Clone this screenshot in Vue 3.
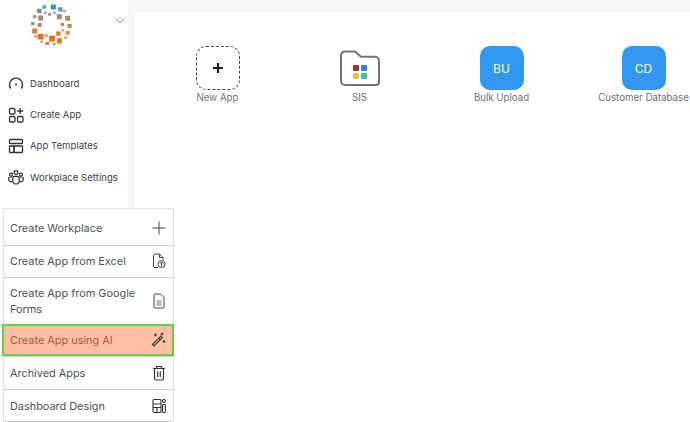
<template>
  <div class="page">
    <aside class="sidebar">
      <div class="brand">
        <svg class="logo" width="44" height="44" viewBox="90 12 132 132">
          <path d="M122 54L104 50M119 75L98 71M122 110L104 93M156 116L139 106M175 101L188 91M178 122L197 113M187 73L209 78M178 50L163 38M118 33L133 21M160 21L181 28" stroke="#d9b9a0" stroke-width="1.500" fill="none" />
          <rect v-for="(s, i) in logoSquares" :key="i" :x="s[0] - s[2] / 2" :y="s[1] - s[2] / 2" :width="s[2]" :height="s[2]" rx="1" :fill="s[3]" />
        </svg>
        <svg class="chevron" width="10" height="6" viewBox="0 0 10 6" fill="none" stroke="#8a8f98" stroke-width="1">
          <path d="M1 1l4 4 4-4" />
        </svg>
      </div>

      <nav class="nav">
        <div class="nav-item">
          <svg width="16" height="16" viewBox="0 0 16 16" fill="none" stroke="#2f3338" stroke-width="1.400">
            <path d="M2.800 12.500a6.500 6.500 0 1 1 10.400 0" />
            <circle cx="8" cy="8.500" r="1" fill="#2f3338" stroke="none" />
          </svg>
          <span>Dashboard</span>
        </div>
        <div class="nav-item">
          <svg width="16" height="16" viewBox="0 0 16 16" fill="none" stroke="#2f3338" stroke-width="1.300">
            <rect x="1.500" y="1.500" width="5.500" height="5.500" rx="1.200" />
            <rect x="1.500" y="9.500" width="5.500" height="5.500" rx="1.200" />
            <rect x="9.500" y="9.500" width="5.500" height="5.500" rx="1.200" />
            <path d="M12.200 1v6M9.200 4h6" />
          </svg>
          <span>Create App</span>
        </div>
        <div class="nav-item">
          <svg width="16" height="16" viewBox="0 0 16 16" fill="none" stroke="#2f3338" stroke-width="1.300">
            <rect x="1.500" y="1.500" width="13" height="4" rx="0.800" />
            <rect x="1.500" y="8" width="4.500" height="6.500" rx="0.800" />
            <rect x="6" y="8" width="8.500" height="6.500" rx="0.800" />
          </svg>
          <span>App Templates</span>
        </div>
        <div class="nav-item">
          <svg width="16" height="16" viewBox="0 0 16 16" fill="none" stroke="#2f3338" stroke-width="1.200">
            <circle cx="8" cy="3.600" r="1.900" />
            <circle cx="3" cy="5.600" r="1.500" />
            <circle cx="13" cy="5.600" r="1.500" />
            <path d="M4.800 9.200A1.800 1.800 0 0 1 6.600 7.400h2.800a1.800 1.800 0 0 1 1.800 1.800v2.600a3.200 3.200 0 0 1-6.400 0z" />
            <path d="M4.800 8H2.400A1.800 1.800 0 0 0 .6 9.800v.4A2.500 2.500 0 0 0 4.800 12M11.200 8h2.400a1.800 1.800 0 0 1 1.800 1.800v.4a2.500 2.500 0 0 1-4.200 1.800" />
          </svg>
          <span>Workplace Settings</span>
        </div>
      </nav>

      <div class="menu">
        <div class="menu-row first">
          <span>Create Workplace</span>
          <svg width="14" height="14" viewBox="0 0 14 14" fill="none" stroke="#444" stroke-width="1">
            <path d="M7 .5v13M.5 7h13" />
          </svg>
        </div>
        <div class="menu-row">
          <span>Create App from Excel</span>
          <svg width="14" height="16" viewBox="0 0 14 16" fill="none" stroke="#444" stroke-width="1">
            <path d="M6 14.500H3a1.500 1.500 0 0 1-1.500-1.500V2.500A1.500 1.500 0 0 1 3 1h4.500L11 4.500V7" />
            <path d="M7.500 1v3.500H11" />
            <circle cx="9.500" cy="11" r="3.500" />
            <path d="M9.500 13.500V9M7.800 10.500l1.700-1.700 1.700 1.700" />
          </svg>
        </div>
        <div class="menu-row">
          <span>Create App from Google Forms</span>
          <svg width="14" height="16" viewBox="0 0 14 16" fill="none" stroke="#444" stroke-width="1">
            <path d="M3 1h5.500L12 4.500v9.500a1 1 0 0 1-1 1H3a1 1 0 0 1-1-1V2a1 1 0 0 1 1-1z" />
            <path d="M4.500 8h5M4.500 10h5M4.500 12h5" stroke="#777" />
          </svg>
        </div>
        <div class="menu-row highlight">
          <span>Create App using AI</span>
          <svg width="15" height="15" viewBox="0 0 15 15" fill="none" stroke="#3f3a36" stroke-width="1.200">
            <path d="M1.500 12.500l8.300-8.300 1.500 1.500-8.300 8.300z" />
            <path d="M7.800 6.200l1.500 1.500" />
            <path d="M4.500 1.500v3M3 3h3M11 .5v3M9.500 2h3M13 8v3M11.500 9.500h3" />
          </svg>
        </div>
        <div class="menu-row after-highlight">
          <span>Archived Apps</span>
          <svg width="14" height="16" viewBox="0 0 14 16" fill="none" stroke="#333" stroke-width="1.200">
            <path d="M1 3.500h12M4.500 3.500V1.500h5v2" />
            <rect x="2.500" y="3.500" width="9" height="11.500" rx="1.500" />
            <path d="M5.700 6.500v5.500M8.300 6.500v5.500" />
          </svg>
        </div>
        <div class="menu-row last">
          <span>Dashboard Design</span>
          <svg width="14" height="16" viewBox="0 0 14 16" fill="none" stroke="#333" stroke-width="1.100">
            <rect x="1" y="1.500" width="8" height="13" rx="1" />
            <path d="M1 6h8M1 9.500h8M5 9.500v5" />
            <rect x="10.500" y="1.500" width="2.800" height="3" rx="1.200" />
            <rect x="10.500" y="6.500" width="2.800" height="8" rx="0.800" />
          </svg>
        </div>
      </div>
    </aside>

    <main class="content">
      <div class="apps">
        <div class="app">
          <div class="tile tile-new">
            <svg width="12" height="12" viewBox="0 0 12 12" stroke="#222" stroke-width="2.200">
              <path d="M6 1v10M1 6h10" />
            </svg>
          </div>
          <div class="app-name">New App</div>
        </div>
        <div class="app">
          <div class="tile">
            <svg width="42" height="40" viewBox="0 0 42 40" fill="none">
              <path d="M2 7.500a4 4 0 0 1 4-4h9a3 3 0 0 1 2 .8l4 3.700a3 3 0 0 0 2 .8H36a4 4 0 0 1 4 4V34a3 3 0 0 1-3 3H6a4 4 0 0 1-4-4z" stroke="#6f7479" stroke-width="2" />
              <rect x="14" y="17" width="6" height="6" rx="1.200" fill="#b5262e" />
              <rect x="22" y="17" width="6" height="6" rx="1.200" fill="#2f80ed" />
              <rect x="14" y="25" width="6" height="6" rx="1.200" fill="#eac13a" />
              <rect x="22" y="25" width="6" height="6" rx="1.200" fill="#1fcf9a" />
            </svg>
          </div>
          <div class="app-name">SIS</div>
        </div>
        <div class="app">
          <div class="tile tile-blue">BU</div>
          <div class="app-name">Bulk Upload</div>
        </div>
        <div class="app">
          <div class="tile tile-blue">CD</div>
          <div class="app-name">Customer Database</div>
        </div>
      </div>
    </main>
  </div>
</template>

<script setup>
// centre x, centre y, size, colour of each logo square (viewBox is 3x screen pixels)
const logoSquares = [
  [133, 21, 10, '#4f9cc4'], [160, 21, 15, '#2f96c8'], [181, 28, 13, '#4f9cc4'], [193, 33, 7, '#6aa6c4'],
  [118, 33, 13, '#5a96b4'], [136, 38, 7, '#8a9aa4'], [149, 43, 9, '#8a9aa4'], [163, 38, 7, '#8a9aa4'],
  [104, 50, 10, '#a89a90'], [122, 54, 15, '#a48c7c'], [178, 50, 15, '#9a8a80'], [203, 55, 15, '#a8886c'],
  [98, 71, 10, '#b08868'], [119, 75, 12, '#b88a60'], [187, 73, 10, '#b88a60'], [209, 78, 12, '#d0804a'],
  [104, 93, 15, '#e87c2e'], [107, 109, 7, '#ec8436'], [122, 110, 17, '#ec6e1c'], [139, 106, 7, '#ec7c2c'],
  [175, 101, 13, '#ec7420'], [188, 91, 7, '#e88a3e'], [203, 98, 12, '#e8883e'], [197, 113, 7, '#ec7c2c'],
  [125, 125, 7, '#ee7a28'], [142, 130, 10, '#ee7420'], [156, 116, 17, '#ec6e1c'], [178, 122, 15, '#ec701e'],
  [163, 132, 7, '#ee7c2c']
]
</script>

<style>
html, body {
  margin: 0;
  background: #f7f7f7;
}
</style>

<style scoped>
.page {
  display: flex;
  width: 690px;
  height: 422px;
  overflow: hidden;
  font-family: Inter, "Liberation Sans", sans-serif;
  background: #f7f7f7;
}

.sidebar {
  width: 128px;
  height: 422px;
  flex-shrink: 0;
  background: #fff;
  display: flex;
  flex-direction: column;
}

.brand {
  height: 68px;
  flex-shrink: 0;
  display: flex;
  padding: 4px 0 0 30px;
  box-sizing: border-box;
  align-items: flex-start;
}

.chevron {
  margin: 14px 0 0 41px;
}

.nav {
  display: flex;
  flex-direction: column;
  flex-shrink: 0;
  padding-left: 8px;
}

.nav-item {
  height: 31.200px;
  flex-shrink: 0;
  display: flex;
  align-items: center;
  gap: 6px;
  font-size: 9.600px;
  color: #3a3f47;
  white-space: nowrap;
}

.menu {
  width: 171px;
  margin: 15px 0 0 3px;
  flex-shrink: 0;
  background: #fff;
  border: 1px solid #e2e2e2;
  border-bottom: none;
  border-radius: 2px 2px 0 0;
  box-sizing: border-box;
  position: relative;
  z-index: 2;
}

.menu-row {
  display: flex;
  align-items: center;
  justify-content: space-between;
  padding: 7px 7px 7px 6px;
  min-height: 32px;
  box-sizing: border-box;
  border-bottom: 1px solid #cfcfcf;
  font-size: 10.900px;
  line-height: 16px;
  color: #4e5359;
}

.menu-row.first {
  min-height: 37px;
  padding-top: 8px;
  padding-bottom: 6px;
}

.menu-row.last {
  padding-top: 8px;
  padding-bottom: 6px;
}

.menu-row span {
  max-width: 135px;
}

.menu-row.highlight {
  margin: -1px -1px 0 -2px;
  padding: 5px 6px 5px 6px;
  min-height: 32px;
  background: #ffbfa3;
  border: 2px solid #66cf45;
  color: #a8593a;
}

.menu-row.after-highlight {
  min-height: 34px;
  border-top: 1px solid #cfcfcf;
}

.content {
  flex: 1;
  margin: 12px 0 0 6px;
  background: #fff;
}

.apps {
  display: grid;
  grid-template-columns: repeat(4, 142px);
  padding: 34px 0 0 12.500px;
}

.app {
  display: flex;
  flex-direction: column;
  align-items: center;
}

.tile {
  width: 44px;
  height: 44px;
  box-sizing: border-box;
  display: flex;
  align-items: center;
  justify-content: center;
}

.tile-new {
  border: 1px dashed #444;
  border-radius: 10px;
}

.tile-blue {
  background: #3197f1;
  border-radius: 10px;
  color: #fff;
  font-size: 12px;
  font-weight: 400;
}

.app-name {
  margin-top: 2px;
  font-size: 9.700px;
  line-height: 12px;
  color: #6b7076;
  white-space: nowrap;
}
</style>
